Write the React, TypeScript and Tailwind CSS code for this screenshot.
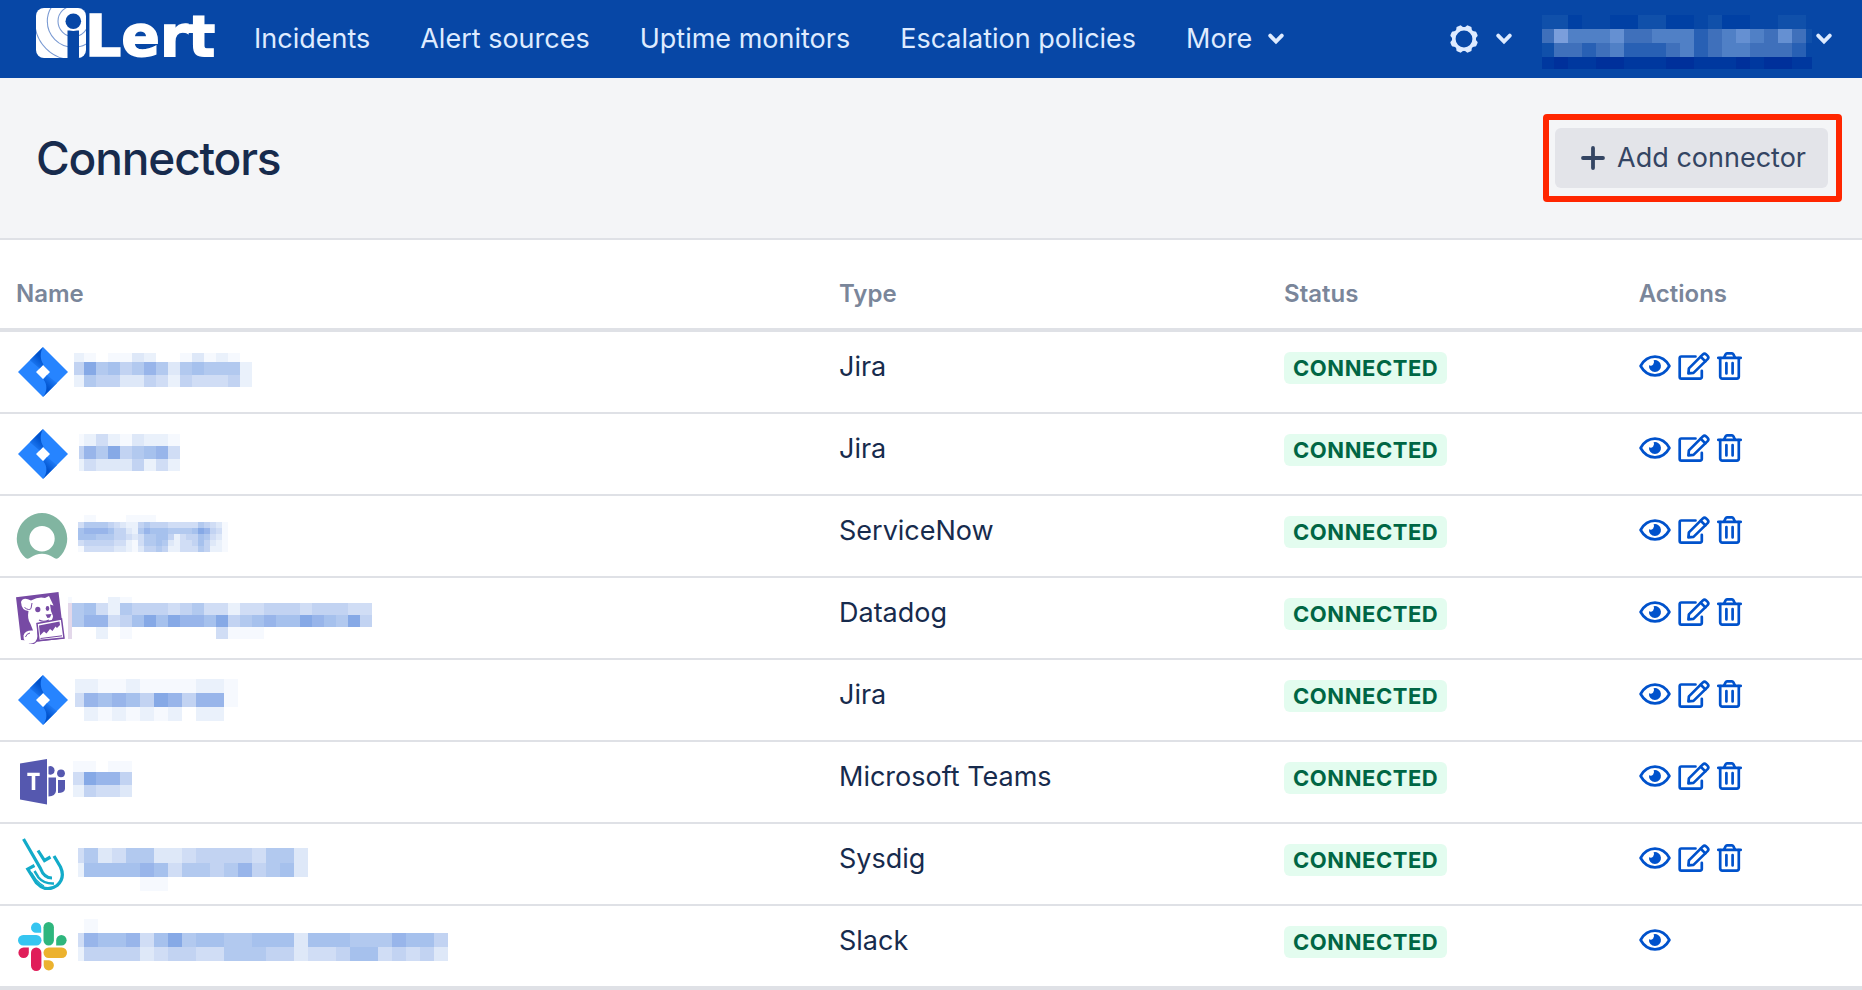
import React from "react";

type IconProps = { className?: string };

function Logo() {
  return (
    <svg viewBox="0 0 178 50" className="h-[50px] w-[178px] overflow-visible" role="img" aria-label="iLert">
      <defs>
        <clipPath id="logo-tile">
          <rect width="50" height="50" rx="8" />
        </clipPath>
      </defs>
      <g clipPath="url(#logo-tile)">
        <rect width="50" height="50" fill="#fff" />
        <g fill="none" stroke="#7b9bd3" strokeWidth="1.1">
          <circle cx="37.3" cy="13.3" r="15.3" />
          <circle cx="37.3" cy="13.3" r="26" />
          <circle cx="37.3" cy="13.3" r="38.5" />
        </g>
        <circle cx="37.3" cy="13.3" r="12" fill="#fff" />
        <rect x="31.5" y="22.5" width="11.5" height="28" fill="#0747a6" />
        <circle cx="37.3" cy="13.3" r="9.6" fill="#fff" />
        <circle cx="37.3" cy="13.3" r="7.8" fill="#0747a6" />
      </g>
      <text
        x="49"
        y="48"
        fontSize="57"
        fontWeight="700"
        fill="#fff"
        stroke="#fff"
        strokeWidth="1.5"
        fontFamily="'DejaVu Sans', sans-serif"
      >
        Lert
      </text>
    </svg>
  );
}

function Chevron() {
  return (
    <svg viewBox="0 0 16 12" className="h-3 w-4" aria-hidden="true">
      <path d="M2.2 2.6 8 8.6l5.800-6" fill="none" stroke="#deebff" strokeWidth="3.800" strokeLinecap="round" strokeLinejoin="miter" />
    </svg>
  );
}

const TEETH = [22.5, 67.5, 112.5, 157.5, 202.5, 247.5, 292.5, 337.5];

function Gear() {
  return (
    <svg viewBox="-14 -14 28 28" className="size-7" aria-hidden="true">
      <circle r="10.200" fill="none" stroke="#deebff" strokeWidth="3.600" />
      {TEETH.map((a) => (
        <path key={a} d="M-4.200-10.500 -2.600-13.400Q-2.300-14 -1.600-14H1.600Q2.300-14 2.600-13.400L4.200-10.500Z" fill="#deebff" transform={`rotate(${a})`} />
      ))}
    </svg>
  );
}

function Plus() {
  return (
    <svg viewBox="0 0 24 24" className="size-6" aria-hidden="true">
      <path d="M12 2v20M2 12h20" stroke="#344563" strokeWidth="3.800" strokeLinecap="round" />
    </svg>
  );
}

function Eye() {
  return (
    <svg viewBox="0 0 32 22" className="h-[22px] w-8" aria-hidden="true">
      <path d="M1.600 11C4.800 5.200 10 1.700 16 1.700S27.200 5.200 30.400 11C27.200 16.800 22 20.300 16 20.300S4.800 16.800 1.600 11Z" fill="none" stroke="#0052cc" strokeWidth="2.700" strokeLinejoin="round" />
      <path d="M14.600 5.200A6 6 0 1 1 10 10.300 3.600 3.600 0 0 0 14.600 5.200Z" fill="#0052cc" />
    </svg>
  );
}

function Edit() {
  return (
    <svg viewBox="0 0 32 28" className="h-7 w-8" aria-hidden="true">
      <g fill="none" stroke="#0052cc" strokeWidth="2.700" strokeLinejoin="round" strokeLinecap="round">
        <path d="M17.500 4.500H3.300A1.600 1.600 0 0 0 1.700 6.100V25A1.600 1.600 0 0 0 3.300 26.600H22.200A1.600 1.600 0 0 0 23.800 25V18.800" />
        <path d="M10.400 21.400 10.900 16.400 24.900 2.400Q26.500 .9 28.100 2.400L29.600 3.900Q31.100 5.500 29.600 7.100L15.500 20.900Z" />
        <path d="M22.700 4.700 27.400 9.400" />
      </g>
    </svg>
  );
}

function Trash() {
  return (
    <svg viewBox="0 0 25 28" className="h-7 w-[25px]" aria-hidden="true">
      <g fill="none" stroke="#0052cc" strokeWidth="2.700" strokeLinejoin="round" strokeLinecap="round">
        <path d="M1.300 5.800H23.700" />
        <path d="M3.200 6.200V24.600A2 2 0 0 0 5.200 26.600H19.800A2 2 0 0 0 21.800 24.600V6.200" />
        <path d="M7.200 5.400 8.600 2.300Q9.100 1.400 10 1.400H15Q15.900 1.400 16.400 2.300L17.800 5.400" />
        <path d="M9.400 11V21.500M15.600 11V21.500" />
      </g>
    </svg>
  );
}

function JiraIcon() {
  return (
    <svg viewBox="0 0 52 52" className="size-[52px]" aria-hidden="true">
      <defs>
        <linearGradient id="jira-a" x1="25" y1="9" x2="14" y2="20" gradientUnits="userSpaceOnUse">
          <stop offset="0.150" stopColor="#0052cc" />
          <stop offset="1" stopColor="#2684ff" />
        </linearGradient>
        <linearGradient id="jira-b" x1="29" y1="43" x2="39" y2="32" gradientUnits="userSpaceOnUse">
          <stop offset="0.150" stopColor="#0052cc" />
          <stop offset="1" stopColor="#2684ff" />
        </linearGradient>
      </defs>
      <path d="M27 1 52 26 27 51 2 26ZM27 19 20 26 27 33 34 26Z" fill="#2684ff" fillRule="evenodd" />
      <path d="M27 1C23.800 7 24 13.500 27.500 18.500L23.500 22.500 13.800 14.200Z" fill="url(#jira-a)" />
      <path d="M27 51C31.500 45 31.500 38.500 27.500 33.500L31 29 41 37Z" fill="url(#jira-b)" />
    </svg>
  );
}

function ServiceNowIcon() {
  return (
    <svg viewBox="0 0 52 52" className="size-[52px]" aria-hidden="true">
      <path d="M26 3A25.700 25.700 0 0 0 9.300 47.800Q12 49.700 14.500 47.600C21 42.500 31 42.500 37.500 47.600Q40 49.700 42.700 47.800A25.700 25.700 0 0 0 26 3ZM26 16A12.700 12.700 0 1 1 26 41.400A12.700 12.700 0 1 1 26 16Z" fill="#81b5a1" fillRule="evenodd" />
    </svg>
  );
}

function DatadogIcon() {
  return (
    <svg viewBox="0 0 52 52" className="size-[52px]" aria-hidden="true">
      <path d="M0 5.200 42.500 0 48 46.500 21 49.800 18 52 13 51.500 12 48.500 5 48Z" fill="#774aa4" />
      <path d="M5 10Q7 4.500 15 8.500Q23 4 29 6L33 4 37.500 13.500 34 12.500 35 19 37 24Q37 29 32 30L27 31Q25 34 22 31.500L21 36 21.500 44Q21 51.500 14 51.500Q7 50.500 7.500 43.500Q9 38 17 38.500L14.500 32Q11 27 12.500 19Q5.500 18.500 5 10Z" fill="#fff" />
      <path d="M8.500 15.500Q13 19 15 16.500L16 11" fill="none" stroke="#774aa4" strokeWidth="1" />
      <ellipse cx="21.800" cy="17.500" rx="2.600" ry="2.800" fill="#774aa4" />
      <ellipse cx="31.500" cy="16.500" rx="1.800" ry="2.400" fill="#774aa4" />
      <path d="M29.500 22.500 35.500 22 34 25.500 31.500 26Z" fill="#774aa4" />
      <path d="M23 28Q27 30.500 33 28" fill="none" stroke="#774aa4" strokeWidth="1.200" />
      <path d="M21 31.500 45.500 27 48 46 23 48.500Z" fill="#fff" stroke="#774aa4" strokeWidth="1.500" />
      <path d="M23 33.500 43.500 29.500 44 33 41 36 39.500 34.500 36.500 39 34 37 30.500 41.500 28 39.500 24 43.500Z" fill="#774aa4" />
      <path d="M24.500 46.500 46 43.800" stroke="#774aa4" strokeWidth="1" />
      <path d="M9.500 45Q10.500 41.500 14 41" fill="none" stroke="#774aa4" strokeWidth="1" />
    </svg>
  );
}

function TeamsIcon() {
  return (
    <svg viewBox="0 0 52 52" className="size-[52px]" aria-hidden="true">
      <g fill="#5558af">
        <path d="M4 7.500 31 3V48.500L4 43.500Z" />
        <path d="M32.500 10.500A4.300 4.300 0 1 1 32.500 18.300Z" />
        <circle cx="45" cy="17.300" r="3.900" />
        <path d="M32.500 21.500H40V35Q39.500 40 32.500 40.500Z" />
        <path d="M42 24H49V33Q48.500 37 42 37Z" />
      </g>
      <path d="M11.300 16.800H23.700V20H19.300V34H15.700V20H11.300Z" fill="#fff" />
    </svg>
  );
}

function SysdigIcon() {
  return (
    <svg viewBox="0 0 52 52" className="size-[52px]" aria-hidden="true">
      <g fill="none" stroke="#12abc9" strokeWidth="3.200" strokeLinejoin="miter">
        <path d="M7.500 1 24.500 30.500Q28 40 36 40" />
        <path d="M22 12.500 28.500 22.500 34.500 19" />
        <path d="M38 18 44.500 29Q49.500 40 41 47.500Q30 55 20.500 45L11.800 31 18.500 27.500" />
        <path d="M18.500 33 22.500 39.500Q28 46 38 45.500" strokeWidth="2.500" />
        <path d="M15.500 34.500 20.500 42Q24 46 28 48" strokeWidth="1.200" />
      </g>
    </svg>
  );
}

function SlackIcon() {
  return (
    <svg viewBox="0 0 52 52" className="size-[52px]" aria-hidden="true">
      <g fill="#36c5f0">
        <rect x="2" y="15" width="23.500" height="10.400" rx="5.200" />
        <path d="M25.200 12.800H20A5.100 5.100 0 1 1 25.200 7.700Z" />
      </g>
      <g fill="#2eb67d">
        <rect x="27.500" y="2" width="10.400" height="23.400" rx="5.200" />
        <path d="M40.200 25.400V20.200A5.200 5.200 0 1 1 45.400 25.400Z" />
      </g>
      <g fill="#ecb22e">
        <rect x="27.500" y="27.500" width="23.500" height="10.400" rx="5.200" />
        <path d="M27.700 40.200H32.900A5.100 5.100 0 1 1 27.700 45.300Z" />
      </g>
      <g fill="#e01e5a">
        <rect x="15" y="27.500" width="10.400" height="23.400" rx="5.200" />
        <path d="M12.800 27.500V32.700A5.200 5.200 0 1 1 7.600 27.500Z" />
      </g>
    </svg>
  );
}

const LIGHT: Record<string, string> = {
  a: "#f6f9fe",
  b: "#eaf1fb",
  c: "#dee8f8",
  d: "#d0ddf5",
  e: "#c2d3f2",
  f: "#b2c9ef",
  g: "#a6c1ed",
  h: "#98b5ea",
  i: "#86a9e6",
  p: "#e3d8ea",
};

const DARK: Record<string, string> = {
  z: "#00309b",
  y: "#00389f",
  x: "#0040a4",
  w: "#1050aa",
  v: "#2860b4",
  u: "#3f70bb",
  t: "#5080c6",
  s: "#6590d2",
  r: "#7b9edb",
};

type Mosaic = {
  x: number;
  y: number;
  first: number;
  cell: number;
  heights: number[];
  rows: string[];
};

function Tiles({ m, colors, className }: { m: Mosaic; colors: Record<string, string>; className: string }) {
  const cols = Math.max(...m.rows.map((r) => r.length));
  const width = m.x + m.first + (cols - 1) * m.cell;
  const height = m.y + m.heights.reduce((a, b) => a + b, 0);
  let y = m.y;
  return (
    <svg width={width} height={height} className={className} shapeRendering="crispEdges" aria-hidden="true">
      {m.rows.map((row, r) => {
        const top = y;
        y += m.heights[r];
        return row.split("").map((c, i) =>
          colors[c] ? (
            <rect
              key={`${r}-${i}`}
              x={i === 0 ? m.x : m.x + m.first + (i - 1) * m.cell}
              y={top}
              width={i === 0 ? m.first : m.cell}
              height={m.heights[r]}
              fill={colors[c]}
            />
          ) : null
        );
      })}
    </svg>
  );
}

const ACCOUNT: Mosaic = {
  x: 0,
  y: 0,
  first: 12,
  cell: 14,
  heights: [14, 14, 14, 12],
  rows: ["wwx..xxwwxx.wxx..ww.", "urtttsuutttvutstusuw", "wuuvutvvvutvuttuuuv.", "yzyyzzyyyzzyyyzyzzyy"],
};

type Connector = {
  Icon: (p: IconProps) => React.ReactElement;
  type: string;
  editable: boolean;
  name: Mosaic;
};

const CONNECTORS: Connector[] = [
  {
    Icon: JiraIcon, type: "Jira", editable: true,
    name: { x: 6, y: 21, first: 10, cell: 12, heights: [9, 13, 12], rows: ["ba.aacb..acaba.", "eifgefhfcfgfffb", "bfeeccedbedddeb"] },
  },
  {
    Icon: JiraIcon, type: "Jira", editable: true,
    name: { x: 11, y: 20, first: 5, cell: 12, heights: [12, 13, 12], rows: ["abdbacbba", "ehfiefghd", "bdcccebdb"] },
  },
  {
    Icon: ServiceNowIcon, type: "ServiceNow", editable: true,
    name: {
      x: 10, y: 19, first: 6, cell: 6, heights: [7, 6, 6, 6, 6, 6],
      rows: [".aa.....aaaaa", "dffffedcbbefeeedddddfedca", "ghhhhgeecbfhgggffffgiheda", "gggfffeedcdffggebdeegfdca", "deeeeeddbadffgfcbddegecba", "adddddccbaceefebbdddfebba"],
    },
  },
  {
    Icon: DatadogIcon, type: "Datadog", editable: true,
    name: {
      x: 0, y: 19, first: 4, cell: 12, heights: [6, 12, 12, 12],
      rows: ["a...ba", "pfgdbfeeedefddbddeeedeeedd", "pfhhdegigihhgiefghggihgfie", "p..b.a.......daaa"],
    },
  },
  {
    Icon: JiraIcon, type: "Jira", editable: true,
    name: { x: 7, y: 19, first: 9, cell: 14, heights: [14, 14, 14], rows: ["bbaabaaaabba", "dhghgeihehha", ".bababab.bb."] },
  },
  {
    Icon: TeamsIcon, type: "Microsoft Teams", editable: true,
    name: { x: 5, y: 19, first: 11, cell: 12, heights: [11, 13, 12], rows: ["aa.aa", "dihhe", "beddc"] },
  },
  {
    Icon: SysdigIcon, type: "Sysdig", editable: true,
    name: { x: 10, y: 24, first: 6, cell: 14, heights: [15, 14, 14], rows: ["dfcdffccdeeeedffc", "bgggghgdffefhefgc", ".....aa"] },
  },
  {
    Icon: SlackIcon, type: "Slack", editable: false,
    name: { x: 10, y: 13, first: 6, cell: 14, heights: [14, 14, 14], rows: [".a", "dhgghdgifggffgggcgggfffhgge", "beeeecdeeddfffeecddeggdedec"] },
  },
];

const NAV = ["Incidents", "Alert sources", "Uptime monitors", "Escalation policies"];

export default function App() {
  return (
    <div className="min-h-screen bg-white font-['Inter',sans-serif] text-[#172b4d]">
      <header className="flex h-[78px] items-center justify-between bg-[#0747a6] pr-[30px] pl-9 text-[27px] leading-10 text-[#deebff]">
        <div className="flex items-center">
          <a href="#home" className="mr-10 pb-3">
            <Logo />
          </a>
          <nav className="flex items-center gap-[50px]">
            {NAV.map((label) => (
              <a key={label} href="#nav" className="whitespace-nowrap">
                {label}
              </a>
            ))}
            <button type="button" className="flex items-center gap-4">
              More
              <Chevron />
            </button>
          </nav>
        </div>
        <div className="flex items-center gap-[30px]">
          <button type="button" aria-label="Settings" className="flex items-center gap-[18px]">
            <Gear />
            <Chevron />
          </button>
          <button type="button" aria-label="Account" className="flex items-center gap-1">
            <Tiles m={ACCOUNT} colors={DARK} className="mt-1.5 w-[270px]" />
            <Chevron />
          </button>
        </div>
      </header>

      <section className="flex h-[162px] items-center justify-between border-b-2 border-[#dfe1e6] bg-[#f4f5f7] pr-5 pl-9">
        <h1 className="text-[46px] leading-[58px] font-medium tracking-tight">Connectors</h1>
        <div className="rounded border-[6px] border-[#ff2600] p-2 pl-1.5">
          <button type="button" className="flex h-[60px] items-center gap-3 rounded-md bg-[#e3e4e9] px-[26px] pr-[22px] text-[27px] text-[#344563]">
            <Plus />
            Add connector
          </button>
        </div>
      </section>

      <table className="w-full table-fixed border-separate border-spacing-0 border-b-2 border-[#dfe1e6] text-left">
        <thead>
          <tr className="h-[92px] text-[24px] text-[#7a869a]">
            <th className="w-[44.2%] border-b-4 border-[#dfe1e6] pt-5 pl-4 font-semibold">Name</th>
            <th className="w-[23.9%] border-b-4 border-[#dfe1e6] pt-5 pl-4 font-semibold">Type</th>
            <th className="w-[19.05%] border-b-4 border-[#dfe1e6] pt-5 pl-4 font-semibold">Status</th>
            <th className="w-[12.85%] border-b-4 border-[#dfe1e6] pt-5 pl-4 font-semibold">Actions</th>
          </tr>
        </thead>
        <tbody>
          {CONNECTORS.map(({ Icon, type, editable, name }, i) => (
            <tr key={i} className="h-[82px] align-top">
              <td className="border-b-2 border-[#dfe1e6] pl-4">
                <a href="#connector" aria-label={`${type} connector`} className="flex h-20 items-start">
                  <span className="shrink-0 pt-3.5">
                    <Icon />
                  </span>
                  <Tiles m={name} colors={LIGHT} className="shrink-0" />
                </a>
              </td>
              <td className="border-b-2 border-[#dfe1e6] pt-3.5 pl-4 text-[27px] leading-[42px]">{type}</td>
              <td className="border-b-2 border-[#dfe1e6] pt-5 pl-4">
                <span className="flex h-8 w-fit items-center rounded-md bg-[#e3fcef] px-[9px] text-[22px] font-bold tracking-wide text-[#006644]">
                  CONNECTED
                </span>
              </td>
              <td className="border-b-2 border-[#dfe1e6] pt-5 pl-4">
                <div className="flex h-7 items-center gap-[7px]">
                  <button type="button" aria-label="View">
                    <Eye />
                  </button>
                  {editable && (
                    <>
                      <button type="button" aria-label="Edit">
                        <Edit />
                      </button>
                      <button type="button" aria-label="Delete">
                        <Trash />
                      </button>
                    </>
                  )}
                </div>
              </td>
            </tr>
          ))}
        </tbody>
      </table>
    </div>
  );
}
